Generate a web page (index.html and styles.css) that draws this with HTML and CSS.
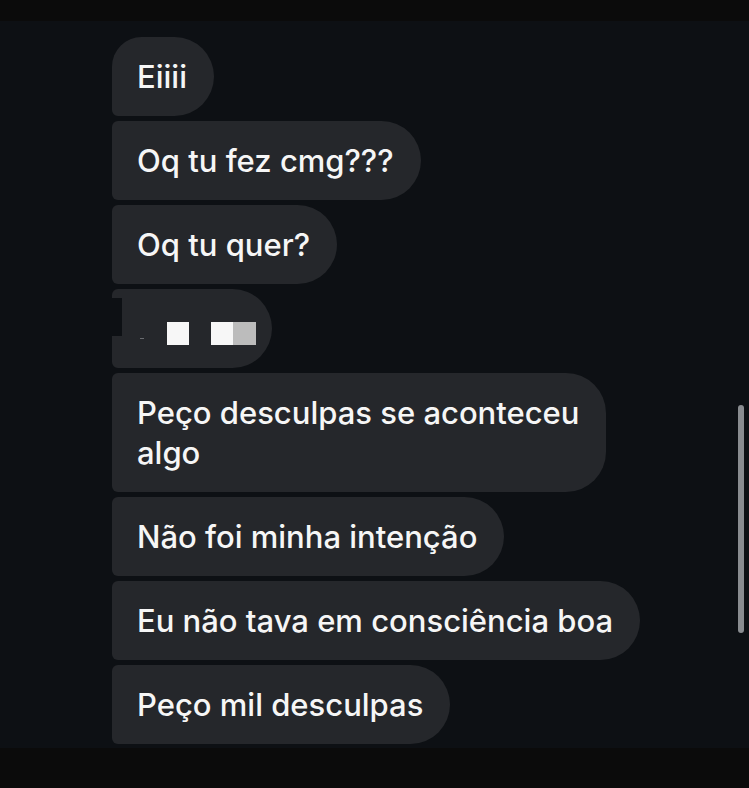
FILE: index.html
```html
<!DOCTYPE html>
<html lang="pt">
<head>
    <meta charset="UTF-8">
    <meta name="viewport" content="width=device-width, initial-scale=1.0">
    <title>Conversa</title>
    <link rel="stylesheet" href="styles.css">
</head>
<body>
    <div class="status-bar"></div>

    <div class="chat">
        <div class="messages">
            <div class="bubble first">Eiiii</div>
            <div class="bubble">Oq tu fez cmg???</div>
            <div class="bubble">Oq tu quer?</div>
            <div class="bubble hidden-msg">
                <span class="notch"></span>
                <span class="dot"></span>
                <span class="block"></span>
                <span class="block wide"><span class="grey"></span></span>
            </div>
            <div class="bubble">Peço desculpas se aconteceu<br>algo</div>
            <div class="bubble">Não foi minha intenção</div>
            <div class="bubble">Eu não tava em consciência boa</div>
            <div class="bubble">Peço mil desculpas</div>
            <div class="next-edge"></div>
        </div>
        <div class="scrollbar"></div>
    </div>

    <div class="nav-bar"></div>
</body>
</html>
```

FILE: styles.css
```css
*{
    margin: 0;
    padding: 0;
    box-sizing: border-box;
}

body{
    width: 749px;
    height: 788px;
    background-color: #0b0b0b;
    font-family: Inter, Roboto, sans-serif;
    display: flex;
    flex-direction: column;
    overflow: hidden;
}

.status-bar{
    height: 21px;
    flex-shrink: 0;
    background-color: #0b0b0b;
}

.chat{
    position: relative;
    height: 727px;
    flex-shrink: 0;
    background-color: #0d1014;
    overflow: hidden;
}

.messages{
    display: flex;
    flex-direction: column;
    align-items: flex-start;
    gap: 5px;
    padding: 16px 0 0 112px;
}

.bubble{
    background-color: #25272b;
    color: #f6f6f6;
    font-size: 31px;
    font-weight: 500;
    line-height: 40px;
    padding: 19.5px 27px 19.5px 25px;
    max-width: 540px;
    border-radius: 6px 40px 40px 6px;
}

.first{
    border-top-left-radius: 30px;
}

/* blurred/cut picture message */
.hidden-msg{
    position: relative;
    width: 160px;
    height: 79px;
    display: flex;
    align-items: center;
    gap: 22px;
    padding: 10px 0 0 55px;
}

.notch{
    position: absolute;
    left: 0;
    top: 9px;
    width: 10px;
    height: 38px;
    background-color: #0d1014;
    border-top: 6px solid #0d1014;
}

.dot{
    position: absolute;
    left: 28px;
    top: 49px;
    width: 4px;
    height: 1px;
    background-color: #6a6c70;
}

.block{
    width: 22px;
    height: 23px;
    background-color: #f7f7f7;
}

.wide{
    width: 45px;
    display: flex;
    justify-content: flex-end;
}

.grey{
    width: 23px;
    height: 23px;
    background-color: #bcbcbc;
}

.next-edge{
    width: 458px;
    height: 1px;
    margin-top: -1px;
    background-color: #1d1f23;
}

.scrollbar{
    position: absolute;
    right: 5px;
    top: 384px;
    width: 6px;
    height: 228px;
    border-radius: 3px;
    background-color: #898c90;
}

.nav-bar{
    height: 40px;
    flex-shrink: 0;
    background-color: #0b0b0b;
}
```
